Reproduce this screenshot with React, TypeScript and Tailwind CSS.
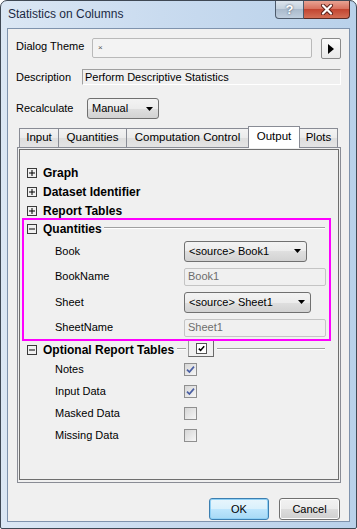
import React from "react";

// Win7 style "Statistics on Columns" dialog

const Expander = ({ open }: { open?: boolean }) => (
  <svg width="10" height="10" viewBox="0 0 10 10" className="shrink-0">
    <rect x="0.5" y="0.5" width="9" height="9" fill="none" stroke="#3a3a3a" />
    <line x1="2" y1="5" x2="8" y2="5" stroke="#000" />
    {!open && <line x1="5" y1="2" x2="5" y2="8" stroke="#000" />}
  </svg>
);

const Arrow = () => (
  <svg width="7" height="4" viewBox="0 0 7 4" className="shrink-0">
    <path d="M0 0H7L3.5 4Z" fill="#000" />
  </svg>
);

const Combo = ({ text, w }: { text: string; w: string }) => (
  <div
    className={`${w} h-[21px] rounded-[3px] border border-[#707070] bg-[linear-gradient(#f3f3f3,#ececec_50%,#dfdfdf_50%,#d2d2d2)] flex items-center pl-[4px] pr-[5px]`}
  >
    <span className="flex-1 text-[11px] text-black leading-none">{text}</span>
    <Arrow />
  </div>
);

const Field = ({ text }: { text: string }) => (
  <div className="w-[142px] h-[18px] rounded-[2px] border border-[#c4c4c4] bg-[#f0f0f0] flex items-center pl-[3px] text-[11px] text-[#6d6d6d]">
    {text}
  </div>
);

const Check = ({ checked }: { checked?: boolean }) => (
  <span className="w-[13px] h-[13px] border border-[#8f8f8f] bg-[linear-gradient(135deg,#d6d6d6,#f6f6f6)] flex items-center justify-center shrink-0">
    {checked && (
      <svg width="9" height="9" viewBox="0 0 9 9">
        <path d="M1 4.6L3.4 7L8 1.6" stroke="#4a5fa3" strokeWidth="1.7" fill="none" />
      </svg>
    )}
  </span>
);

const Groove = ({ className = "" }: { className?: string }) => (
  <div className={`h-[2px] border-t border-t-[#a0a0a0] border-b border-b-white ${className}`} />
);

const Node = ({ label, open }: { label: string; open?: boolean }) => (
  <div className="h-[19px] flex items-center pl-[7px] gap-[6px]">
    <Expander open={open} />
    <span className="text-[12px] font-bold text-black">{label}</span>
  </div>
);

const Row = ({ label, h, children }: { label: string; h: string; children: React.ReactNode }) => (
  <div className={`${h} flex items-center pl-[35px]`}>
    <span className="w-[129px] text-[11px] text-black">{label}</span>
    {children}
  </div>
);

const tabs = [
  { name: "Input", w: "w-[40px]" },
  { name: "Quantities", w: "w-[68px]" },
  { name: "Computation Control", w: "w-[122px]" },
  { name: "Output", w: "w-[52px]", active: true },
  { name: "Plots", w: "w-[38px]" },
];

export default function App() {
  return (
    <div className="w-[357px] h-[529px] flex flex-col rounded-t-[7px] rounded-b-[2px] border border-[#3f4854] bg-[linear-gradient(90deg,#dbe7f4,#c9dbef_45%,#b9d1ea)] px-[6px] pb-[6px] font-['Liberation_Sans',Arial,sans-serif] overflow-hidden">
      {/* title bar */}
      <div className="h-[27px] flex items-start shrink-0">
        <span className="pl-[1px] pt-[6px] text-[12px] leading-[15px] text-[#1b2a44]">Statistics on Columns</span>
        <div className="ml-auto -mt-px flex">
          <div className="w-[29px] h-[19px] rounded-bl-[4px] border border-[#4d5a6b] border-t-0 bg-[linear-gradient(#dfe7ef,#c3d0dd_50%,#a9b9cb_50%,#bfcede)] flex items-center justify-center">
            <span className="text-[13px] font-bold text-white leading-none [text-shadow:0_0_2px_#2d3c52]">?</span>
          </div>
          <div className="w-[46px] h-[19px] rounded-br-[4px] border border-[#5a2a24] border-t-0 border-l-0 bg-[linear-gradient(#eaa99a,#d8705d_50%,#c2432f_50%,#d36e55)] flex items-center justify-center">
            <svg width="14" height="11" viewBox="0 0 14 11">
              <path d="M3 1.5L11 9.5M11 1.5L3 9.5" stroke="#5a1f18" strokeWidth="4" strokeLinecap="round" />
              <path d="M3 1.5L11 9.5M11 1.5L3 9.5" stroke="#fff" strokeWidth="2.2" strokeLinecap="round" />
            </svg>
          </div>
        </div>
      </div>

      {/* client area */}
      <div className="flex-1 flex flex-col bg-[#f0f0f0] border border-[#7f93ad]">
        {/* Dialog Theme */}
        <div className="mt-[9px] h-[21px] flex items-start pl-[8px]">
          <span className="w-[76px] text-[11px] leading-[14px] pt-[1px] text-black">Dialog Theme</span>
          <div className="w-[220px] h-[20px] rounded-[2px] border border-[#b9b9b9] bg-[#f3f3f3] flex items-center pl-[5px]">
            <span className="text-[8px] text-[#555] leading-none">×</span>
          </div>
          <div className="ml-[9px] w-[20px] h-[21px] rounded-[2px] border border-[#8a8a8a] bg-[linear-gradient(#fbfbfb,#e9e9e9)] flex items-center justify-center">
            <svg width="6" height="10" viewBox="0 0 6 10">
              <path d="M0 0L6 5L0 10Z" fill="#000" />
            </svg>
          </div>
        </div>

        {/* Description */}
        <div className="mt-[10px] h-[16px] flex items-center pl-[8px]">
          <span className="w-[66px] text-[11px] text-black">Description</span>
          <div className="w-[259px] h-[16px] border-t border-l border-[#a0a0a0] border-b border-r border-b-white border-r-white flex items-center pl-[2px] text-[11px] text-black">
            Perform Descriptive Statistics
          </div>
        </div>

        {/* Recalculate */}
        <div className="mt-[13px] h-[21px] flex items-center pl-[8px]">
          <span className="w-[71px] text-[11px] text-black">Recalculate</span>
          <Combo text="Manual" w="w-[72px]" />
        </div>

        {/* tabs */}
        <div className="mt-[7px] ml-[9px] h-[21px] flex items-end pl-[2px]">
          {tabs.map((t, i) =>
            t.active ? (
              <div
                key={t.name}
                className={`${t.w} h-[22px] -mb-px -ml-px relative z-10 border border-b-0 border-[#898c95] bg-white flex items-center justify-center pb-[2px] text-[11.5px] text-black`}
              >
                {t.name}
              </div>
            ) : (
              <div
                key={t.name}
                className={`${t.w} h-[19px] border-t border-r ${i === 0 ? "border-l" : ""} border-[#898c95] bg-[linear-gradient(#f3f3f3,#ebebeb_50%,#dedede_50%,#e4e4e4)] flex items-center justify-center text-[11.5px] text-black`}
              >
                {t.name}
              </div>
            )
          )}
        </div>

        {/* tab panel */}
        <div className="ml-[9px] w-[324px] h-[336px] border border-[#898c95] p-px pb-[2px] flex flex-col">
          <div className="flex-1 border border-[#6e6e6e] pt-[13px] flex flex-col">
            <Node label="Graph" />
            <Node label="Dataset Identifier" />
            <Node label="Report Tables" />

            <div className="relative">
              <div className="h-[18px] flex items-center pl-[7px] pr-[13px]">
                <Expander open />
                <span className="ml-[6px] text-[12px] font-bold text-black">Quantities</span>
                <Groove className="ml-[2px] flex-1 mb-[3px]" />
              </div>
              <Row label="Book" h="h-[26px]">
                <Combo text="<source> Book1" w="w-[123px]" />
              </Row>
              <Row label="BookName" h="h-[25px]">
                <Field text="Book1" />
              </Row>
              <Row label="Sheet" h="h-[26px]">
                <Combo text="<source> Sheet1" w="w-[127px]" />
              </Row>
              <Row label="SheetName" h="h-[25px]">
                <Field text="Sheet1" />
              </Row>
              <div className="absolute left-[2px] w-[309px] -top-[2px] -bottom-[1px] border-2 border-[#ff00ff] pointer-events-none z-10" />
            </div>

            <div className="h-[19px] flex items-center pl-[7px] pr-[13px]">
              <Expander open />
              <span className="ml-[6px] text-[12px] font-bold text-black whitespace-nowrap">Optional Report Tables</span>
              <Groove className="ml-[3px] w-[9px] mb-[2px]" />
              <div className="ml-[2px] w-[26px] h-[17px] self-start border border-[#9a9a9a] border-b-[#6a6a6a] border-r-[#6a6a6a] bg-[#f0f0f0] flex items-center justify-center">
                <span className="w-[11px] h-[11px] border border-[#555] bg-white flex items-center justify-center">
                  <svg width="7" height="7" viewBox="0 0 7 7">
                    <path d="M0.8 3.6L2.6 5.4L6.2 1.2" stroke="#000" strokeWidth="1.5" fill="none" />
                  </svg>
                </span>
              </div>
              <Groove className="ml-[3px] flex-1 mb-[2px]" />
            </div>
            <Row label="Notes" h="h-[21px]">
              <Check checked />
            </Row>
            <Row label="Input Data" h="h-[22px]">
              <Check checked />
            </Row>
            <Row label="Masked Data" h="h-[22px]">
              <Check />
            </Row>
            <Row label="Missing Data" h="h-[22px]">
              <Check />
            </Row>
          </div>
        </div>

        {/* buttons */}
        <div className="mt-[15px] flex justify-end gap-[10px] pr-[9px]">
          <button className="w-[60px] h-[22px] rounded-[3px] border border-[#3c7fb1] bg-[linear-gradient(#e8f5fc,#d9f0fc_50%,#bee6fd_50%,#a7d9f5)] shadow-[inset_0_0_0_1px_#8fd0f5] text-[11px] text-black">
            OK
          </button>
          <button className="w-[61px] h-[22px] rounded-[3px] border border-[#707070] bg-[linear-gradient(#f2f2f2,#ebebeb_50%,#dddddd_50%,#cfcfcf)] shadow-[inset_0_0_0_1px_#fcfcfc] text-[11px] text-black">
            Cancel
          </button>
        </div>
      </div>
    </div>
  );
}
